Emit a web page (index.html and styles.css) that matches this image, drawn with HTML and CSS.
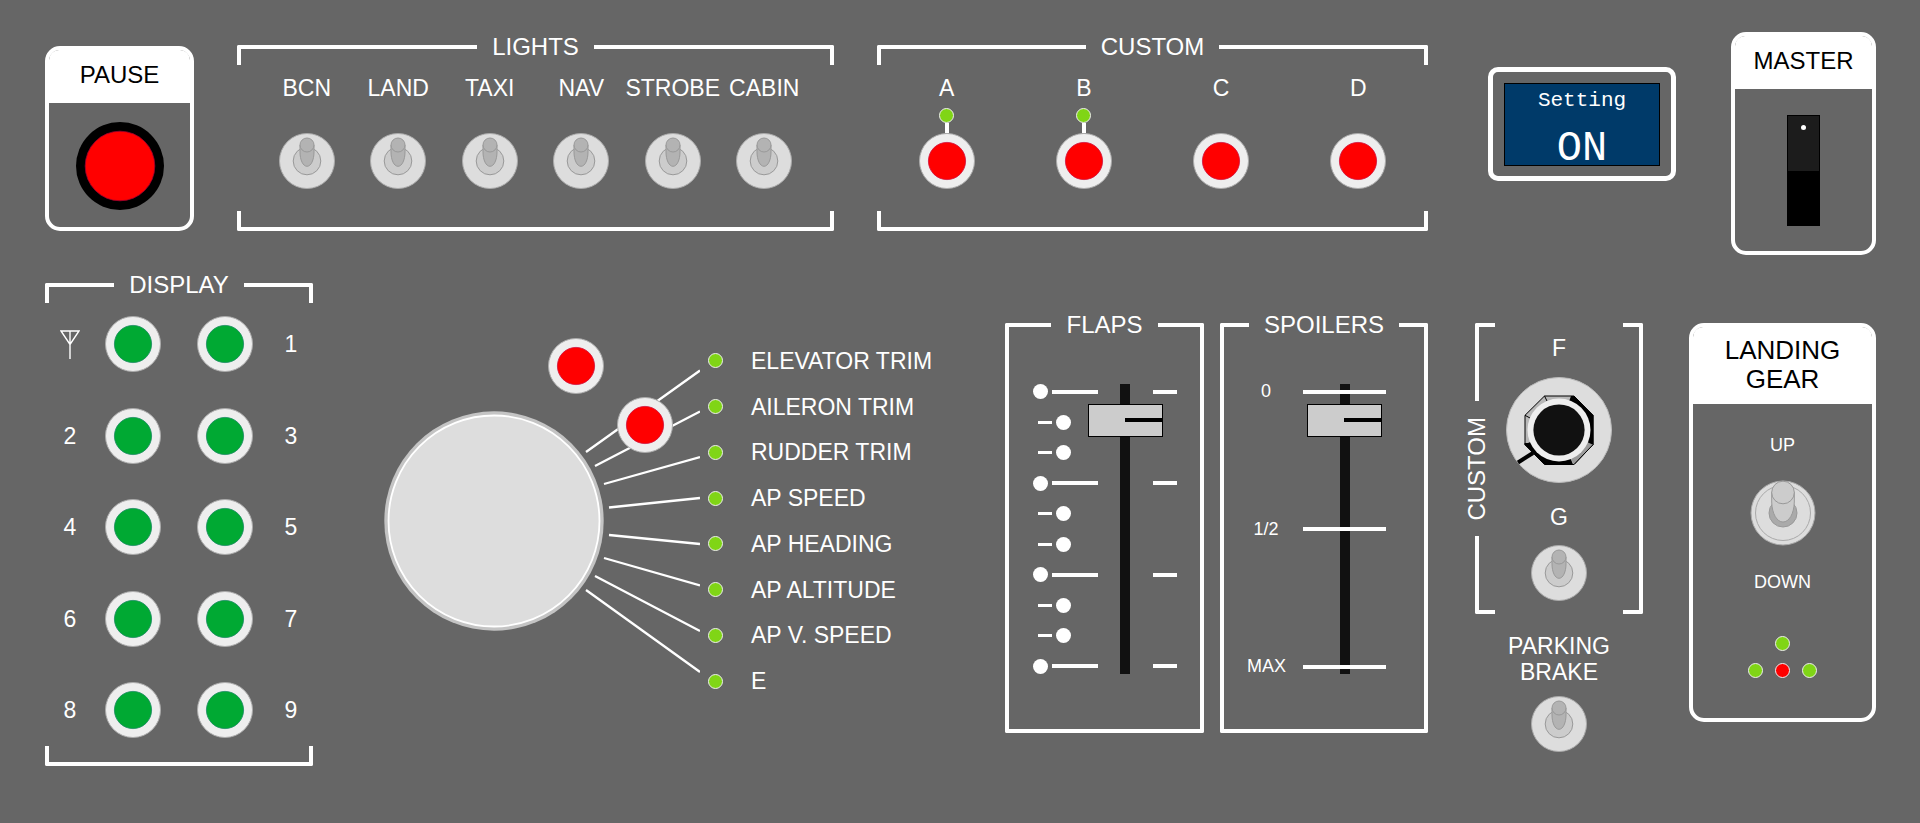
FILE: index.html
```html
<!DOCTYPE html>
<html lang="en">
<head>
<meta charset="utf-8">
<title>Flight control panel</title>
<link rel="stylesheet" href="styles.css">
</head>
<body>
<svg class="defs" width="0" height="0" aria-hidden="true">
  <symbol id="toggle" viewBox="0 0 56 56">
    <circle cx="28" cy="28" r="27.5" fill="#ddd" stroke="#aaa"/>
    <circle cx="28" cy="28" r="13.8" fill="#ccc" stroke="#999"/>
    <path d="M21 12V19C21 27 24 33.3 28 33.3S35 27 35 19V12Z" fill="#b3b3b3" stroke="#999"/>
    <circle cx="28" cy="12" r="7" fill="#b3b3b3" stroke="#999"/>
  </symbol>
  <symbol id="push-red" viewBox="0 0 56 56">
    <circle cx="28" cy="28" r="27.5" fill="#eee" stroke="#aaa"/>
    <circle cx="28" cy="28" r="18.6" fill="#f00" stroke="#d0103c" stroke-width=".8"/>
  </symbol>
  <symbol id="push-green" viewBox="0 0 56 56">
    <circle cx="28" cy="28" r="27.5" fill="#eee" stroke="#aaa"/>
    <circle cx="28" cy="28" r="18.6" fill="#00a933" stroke="#1a8a62" stroke-width=".8"/>
  </symbol>
</svg>

<main class="console">
  <div class="row row-top">
    <section class="card pause">
      <h2 class="card-title" id="pause">PAUSE</h2>
      <button class="knob pause-button" aria-labelledby="pause">
        <svg viewBox="0 0 88 88"><circle cx="44" cy="44" r="44"/><circle cx="44" cy="44" r="34.8" fill="#f00" stroke="#a00030" stroke-width=".8"/></svg>
      </button>
    </section>

    <section class="group">
      <h2 class="group-head"><span>LIGHTS</span></h2>
      <div class="cells lights">
        <div class="cell"><span class="label" id="bcn">BCN</span><button class="knob toggle" role="switch" aria-checked="true" aria-labelledby="bcn"><svg><use href="#toggle"/></svg></button></div>
        <div class="cell"><span class="label" id="land">LAND</span><button class="knob toggle" role="switch" aria-checked="true" aria-labelledby="land"><svg><use href="#toggle"/></svg></button></div>
        <div class="cell"><span class="label" id="taxi">TAXI</span><button class="knob toggle" role="switch" aria-checked="true" aria-labelledby="taxi"><svg><use href="#toggle"/></svg></button></div>
        <div class="cell"><span class="label" id="nav">NAV</span><button class="knob toggle" role="switch" aria-checked="true" aria-labelledby="nav"><svg><use href="#toggle"/></svg></button></div>
        <div class="cell"><span class="label" id="strobe">STROBE</span><button class="knob toggle" role="switch" aria-checked="true" aria-labelledby="strobe"><svg><use href="#toggle"/></svg></button></div>
        <div class="cell"><span class="label" id="cabin">CABIN</span><button class="knob toggle" role="switch" aria-checked="true" aria-labelledby="cabin"><svg><use href="#toggle"/></svg></button></div>
      </div>
      <div class="group-foot"></div>
    </section>

    <section class="group">
      <h2 class="group-head"><span>CUSTOM</span></h2>
      <div class="cells custom">
        <div class="cell"><span class="label" id="ca">A</span><i class="led"></i><i class="stem"></i><button class="knob" aria-labelledby="ca"><svg><use href="#push-red"/></svg></button></div>
        <div class="cell"><span class="label" id="cb">B</span><i class="led"></i><i class="stem"></i><button class="knob" aria-labelledby="cb"><svg><use href="#push-red"/></svg></button></div>
        <div class="cell"><span class="label" id="cc">C</span><button class="knob" aria-labelledby="cc"><svg><use href="#push-red"/></svg></button></div>
        <div class="cell"><span class="label" id="cd">D</span><button class="knob" aria-labelledby="cd"><svg><use href="#push-red"/></svg></button></div>
      </div>
      <div class="group-foot"></div>
    </section>

    <div class="lcd-slot">
      <div class="lcd-frame">
        <div class="lcd">
          <span class="lcd-name">Setting</span>
          <span class="lcd-value">ON</span>
        </div>
      </div>
    </div>

    <section class="card">
      <h2 class="card-title" id="master">MASTER</h2>
      <button class="rocker" role="switch" aria-checked="false" aria-labelledby="master"><i class="rocker-cap"><i class="rocker-dot"></i></i></button>
    </section>
  </div>

  <div class="row row-bottom">
    <section class="group">
      <h2 class="group-head"><span>DISPLAY</span></h2>
      <div class="display-grid">
        <span class="label" id="d0"><svg class="antenna" viewBox="0 0 20 29" role="img" aria-label="Antenna"><path d="M1 1H19L10 14.5ZM10 1V29" fill="none" stroke="#fff" stroke-width="1.4"/></svg></span>
        <button class="knob" aria-labelledby="d0"><svg><use href="#push-green"/></svg></button>
        <button class="knob" aria-labelledby="d1"><svg><use href="#push-green"/></svg></button>
        <span class="label" id="d1">1</span>
        <span class="label" id="d2">2</span>
        <button class="knob" aria-labelledby="d2"><svg><use href="#push-green"/></svg></button>
        <button class="knob" aria-labelledby="d3"><svg><use href="#push-green"/></svg></button>
        <span class="label" id="d3">3</span>
        <span class="label" id="d4">4</span>
        <button class="knob" aria-labelledby="d4"><svg><use href="#push-green"/></svg></button>
        <button class="knob" aria-labelledby="d5"><svg><use href="#push-green"/></svg></button>
        <span class="label" id="d5">5</span>
        <span class="label" id="d6">6</span>
        <button class="knob" aria-labelledby="d6"><svg><use href="#push-green"/></svg></button>
        <button class="knob" aria-labelledby="d7"><svg><use href="#push-green"/></svg></button>
        <span class="label" id="d7">7</span>
        <span class="label" id="d8">8</span>
        <button class="knob" aria-labelledby="d8"><svg><use href="#push-green"/></svg></button>
        <button class="knob" aria-labelledby="d9"><svg><use href="#push-green"/></svg></button>
        <span class="label" id="d9">9</span>
      </div>
      <div class="group-foot"></div>
    </section>

    <section class="selector">
      <div class="dial-area">
        <svg class="rays" viewBox="0 0 316 366" aria-hidden="true">
          <path d="M202 114L316 32.5M211 128L316 73.5M220 146L316 119M225 169.5L316 160M225 197L316 206M220 220L316 247.5M211 238L316 293M202 252L316 334" stroke="#fff" stroke-width="2.3" fill="none"/>
        </svg>
        <button class="knob dial" aria-label="Selector dial">
          <svg viewBox="0 0 220 220"><circle cx="110" cy="110" r="109.7" fill="#c4c4c4"/><circle cx="110" cy="110" r="105.5" fill="#ddd" stroke="#fff" stroke-width="1.8"/></svg>
        </button>
        <button class="knob dial-a" aria-label="Select"><svg><use href="#push-red"/></svg></button>
        <button class="knob dial-b" aria-label="Confirm"><svg><use href="#push-red"/></svg></button>
      </div>
      <ul class="modes">
        <li><i class="led"></i>ELEVATOR TRIM</li>
        <li><i class="led"></i>AILERON TRIM</li>
        <li><i class="led"></i>RUDDER TRIM</li>
        <li><i class="led"></i>AP SPEED</li>
        <li><i class="led"></i>AP HEADING</li>
        <li><i class="led"></i>AP ALTITUDE</li>
        <li><i class="led"></i>AP V. SPEED</li>
        <li><i class="led"></i>E</li>
      </ul>
    </section>

    <section class="group closed">
      <h2 class="group-head"><label for="flaps">FLAPS</label></h2>
      <div class="group-body flaps">
        <div class="scale">
          <div class="major"><i class="dot"></i><i class="tick"></i></div>
          <div class="minor"><i class="tick"></i><i class="dot"></i></div>
          <div class="minor"><i class="tick"></i><i class="dot"></i></div>
          <div class="major"><i class="dot"></i><i class="tick"></i></div>
          <div class="minor"><i class="tick"></i><i class="dot"></i></div>
          <div class="minor"><i class="tick"></i><i class="dot"></i></div>
          <div class="major"><i class="dot"></i><i class="tick"></i></div>
          <div class="minor"><i class="tick"></i><i class="dot"></i></div>
          <div class="minor"><i class="tick"></i><i class="dot"></i></div>
          <div class="major"><i class="dot"></i><i class="tick"></i></div>
        </div>
        <input class="fader" id="flaps" type="range" min="0" max="100" step="0.1" value="7.6">
        <div class="scale right-scale">
          <div><i class="tick"></i></div>
          <div><i class="tick"></i></div>
          <div><i class="tick"></i></div>
          <div><i class="tick"></i></div>
        </div>
      </div>
    </section>

    <section class="group closed spoilers-group">
      <h2 class="group-head"><label for="spoilers">SPOILERS</label></h2>
      <div class="group-body spoilers">
        <div class="scale names"><span>0</span><span>1/2</span><span>MAX</span></div>
        <div class="fader-stack">
          <input class="fader" id="spoilers" type="range" min="0" max="100" step="0.1" value="7.6">
          <div class="scale bars"><div><i class="tick"></i></div><div><i class="tick"></i></div><div><i class="tick"></i></div></div>
        </div>
      </div>
    </section>

    <div class="aux">
      <section class="side-group">
        <h2 class="side-head"><span>CUSTOM</span></h2>
        <div class="side-body">
          <span class="label" id="cf">F</span>
          <button class="knob rotary" aria-labelledby="cf">
            <svg viewBox="-53 -53 106 106">
              <circle r="52.5" fill="#ddd" stroke="#bbb"/>
              <path d="M-41 32.5L-26 23" stroke="#000" stroke-width="4"/>
              <path d="M-14.5-34H15L34-14.7V14.7L15 34.5H-14.5L-34 14.7V-14.7Z" fill="#b8b8b8" stroke="#000"/>
              <path d="M12-34H15L34.5-14.7V14.7L30 17 0 0ZM-34.5 13L-31 13 0 0 14 34.5H-14.5L-34.5 14.7Z"/>
              <path d="M34 14.7L15 34.5 12 29 28 12Z" fill="#999"/>
              <path d="M34 14.7L15 34.5" stroke="#000"/>
              <path d="M-14.5-34L-12-29M-34-14.7L-29-12" stroke="#000"/>
              <circle r="31.5" fill="#eee"/>
              <circle r="25.6" fill="#111"/>
            </svg>
          </button>
          <span class="label" id="cg">G</span>
          <button class="knob" role="switch" aria-checked="true" aria-labelledby="cg"><svg><use href="#toggle"/></svg></button>
        </div>
        <div class="side-end"></div>
      </section>
      <div class="parking">
        <span class="label" id="pb">PARKING<br>BRAKE</span>
        <button class="knob" role="switch" aria-checked="true" aria-labelledby="pb"><svg><use href="#toggle"/></svg></button>
      </div>
    </div>

    <div class="gear-slot">
      <section class="card gear">
        <h2 class="card-title" id="gear">LANDING<br>GEAR</h2>
        <span class="small">UP</span>
        <button class="knob lever" role="switch" aria-checked="true" aria-labelledby="gear">
          <svg viewBox="0 0 66 66">
            <circle cx="33" cy="33" r="32" fill="#ddd" stroke="#aaa"/>
            <circle cx="33" cy="33" r="27.5" fill="#ddd" stroke="#aaa"/>
            <circle cx="33" cy="33" r="14" fill="#aaa" stroke="#999"/>
            <path d="M21.7 12V22C22 34 27 42 33 42S44 34 44.3 22V12Z" fill="#ccc" stroke="#999"/>
            <circle cx="33" cy="12.5" r="11.3" fill="#ccc" stroke="#999"/>
          </svg>
        </button>
        <span class="small">DOWN</span>
        <div class="gear-leds">
          <i class="led"></i>
          <div class="led-row"><i class="led"></i><i class="led red"></i><i class="led"></i></div>
        </div>
      </section>
    </div>
  </div>
</main>
</body>
</html>
```
FILE: styles.css
```css
*, *::before, *::after { box-sizing: border-box; }
body {
  margin: 0;
  min-height: 100vh;
  background: #666;
  color: #fff;
  font-family: "Liberation Sans", Arial, sans-serif;
  font-size: 23px;
  line-height: 26px;
}
.defs { display: block; }
h2 { margin: 0; font-size: 24px; line-height: 28px; font-weight: normal; }
i { display: block; flex: none; }

.console { padding: 32px 44px 0 45px; }
.row { display: grid; align-items: start; }
.row-top { grid-template-columns: 149fr 43fr 597fr 43fr 551fr 60fr 188fr 55fr 145fr; }
.row-top > :nth-child(1) { grid-column: 1; }
.row-top > :nth-child(2) { grid-column: 3; }
.row-top > :nth-child(3) { grid-column: 5; }
.row-top > :nth-child(4) { grid-column: 7; }
.row-top > :nth-child(5) { grid-column: 9; }
.row-bottom {
  grid-template-columns: 268fr 692fr 199fr 224fr 215fr 233fr;
  margin-top: 16px;
}

/* Round controls */
.knob {
  display: block;
  flex: none;
  width: 56px;
  height: 56px;
  padding: 0;
  border: 0;
  border-radius: 50%;
  background: none;
  cursor: pointer;
}
.knob svg { display: block; width: 100%; height: 100%; }
.led {
  width: 15px;
  height: 15px;
  border: 1px solid #eee;
  border-radius: 50%;
  background: #80d516;
}
.led.red { background: #f00; }
.label { text-align: center; white-space: nowrap; }

/* Solid cards */
.card {
  display: flex;
  flex-direction: column;
  align-items: center;
  border: 4px solid #fff;
  border-radius: 15px;
}
.card-title {
  align-self: stretch;
  padding: 11px 0 14px;
  border-radius: 10px 10px 0 0;
  background: #fff;
  color: #000;
  text-align: center;
}
.pause { margin-top: 14px; }
.pause-button { width: 88px; height: 88px; margin: 19px 0 17px; }
.rocker {
  width: 33px;
  height: 111px;
  margin: 26px 0 25px;
  padding: 0;
  border: 1px solid #000;
  background: #000;
}
.rocker-cap { height: 55px; margin-bottom: 54px; padding-top: 9px; background: #1c1c1c; }
.rocker-dot { width: 5px; height: 5px; margin: 0 auto; border-radius: 50%; background: #fff; }

/* Bracketed groups */
.row-top .group { margin-top: 1px; }
.group-head { display: flex; height: 32px; }
.group-head > * { padding: 0 15px; }
.group-head::before, .group-head::after {
  content: "";
  flex: 1;
  height: 20px;
  margin-top: 12px;
  border-top: 4px solid #fff;
}
.group-head::before { border-left: 4px solid #fff; border-top-left-radius: 2px; }
.group-head::after { border-right: 4px solid #fff; border-top-right-radius: 2px; }
.group-foot {
  height: 20px;
  border: solid #fff;
  border-width: 0 4px 4px;
  border-radius: 0 0 2px 2px;
}
.closed { margin-top: 40px; }
.spoilers-group { margin-left: 16px; }
.group-body {
  border: solid #fff;
  border-width: 0 4px 4px;
  border-radius: 0 0 2px 2px;
  padding: 41px 0 55px;
}

.cells { display: grid; padding: 10px 24px 22px; }
.lights { grid-template-columns: repeat(6, minmax(0, 1fr)); }
.custom { grid-template-columns: repeat(4, minmax(0, 1fr)); padding: 10px 1px 22px; }
.cell { display: flex; flex-direction: column; align-items: center; min-height: 114px; }
.cell .knob { margin-top: auto; }
.cell .led { margin-top: 7px; }
.stem { width: 4px; height: 10px; background: #fff; }
.cell .stem + .knob { margin-top: 0; }

/* Readout */
.lcd-frame { margin-top: 35px; padding: 11px 11px 10px; border: 5px solid #fff; border-radius: 10px; }
.lcd {
  display: flex;
  flex-direction: column;
  align-items: center;
  gap: 21px;
  padding-top: 5px;
  border: 1px solid #000;
  background: #003a69;
  font-family: "Liberation Mono", "Courier New", monospace;
}
.lcd-name { font-size: 21px; line-height: 24px; }
.lcd-value { font-size: 42px; line-height: 31px; }

/* Display keys */
.display-grid {
  display: grid;
  grid-template-columns: 34fr 92fr 91fr 42fr;
  align-content: space-between;
  align-items: center;
  justify-items: center;
  height: 443px;
  padding: 13px 1px 8px 8px;
}
.antenna { display: block; width: 20px; height: 29px; }

/* Mode selector */
.selector { display: flex; padding: 67px 0 0 71px; }
.dial-area { position: relative; flex: none; width: 316px; height: 366px; }
.rays { display: block; width: 100%; height: 100%; }
.dial, .dial-a, .dial-b { position: absolute; }
.dial { left: 0; top: 73px; width: 220px; height: 220px; }
.dial-a { left: 164px; top: 0; }
.dial-b { left: 233px; top: 59px; }
.modes {
  display: grid;
  grid-auto-rows: 1fr;
  height: 366px;
  margin: 0;
  padding: 0 0 0 8px;
  list-style: none;
}
.modes li { display: flex; align-items: center; gap: 28px; white-space: nowrap; }

/* Faders */
.flaps, .spoilers { display: flex; justify-content: center; }
.scale { display: flex; flex-direction: column; justify-content: space-between; height: 290px; }
.scale > div { display: flex; align-items: center; height: 15px; gap: 4px; }
.dot { width: 15px; height: 15px; border-radius: 50%; background: #fff; }
.tick { height: 4px; background: #fff; }
.major .tick { width: 46px; }
.minor { padding-left: 5px; }
.minor .tick { width: 14px; height: 3px; }
.right-scale .tick { width: 24px; }
.fader {
  appearance: none;
  writing-mode: vertical-lr;
  width: 75px;
  height: 290px;
  margin: 0;
  background: linear-gradient(#111, #111) center / 10px 100% no-repeat;
  cursor: pointer;
}
.fader::-webkit-slider-thumb {
  appearance: none;
  width: 75px;
  height: 33px;
  border: 1px solid #000;
  background: linear-gradient(#000, #000) right center / 37px 4px no-repeat, #ccc;
}
.flaps .fader { position: relative; margin: 0 -10px; }
.names { width: 38px; margin-right: 18px; font-size: 18px; line-height: 15px; text-align: center; }
.spoilers { justify-content: flex-end; padding-right: 38px; }
.fader-stack { display: grid; justify-items: center; }
.fader-stack > * { grid-area: 1 / 1; }
.bars { z-index: 1; pointer-events: none; }
.bars .tick { width: 83px; }

/* Vertical bracket group */
.aux { padding: 52px 0 0 35px; }
.side-group { display: flex; }
.side-head { display: flex; flex-direction: column; width: 32px; }
.side-head span { width: 28px; padding: 16px 0; writing-mode: vertical-rl; transform: rotate(180deg); }
.side-head::before, .side-head::after {
  content: "";
  flex: 1;
  margin-left: 12px;
  border-left: 4px solid #fff;
}
.side-head::before { border-top: 4px solid #fff; border-top-left-radius: 2px; }
.side-head::after { border-bottom: 4px solid #fff; border-bottom-left-radius: 2px; }
.side-body {
  display: flex;
  flex: 1;
  flex-direction: column;
  align-items: center;
  padding: 12px 0 13px;
}
.side-body .rotary { width: 106px; height: 106px; margin: 16px 0 21px; }
.side-body .label + .knob:last-child { margin-top: 15px; }
.side-end {
  width: 20px;
  border: solid #fff;
  border-width: 4px 4px 4px 0;
  border-radius: 0 2px 2px 0;
}
.parking {
  display: flex;
  flex-direction: column;
  align-items: center;
  gap: 11px;
  padding: 19px 0 0 12px;
}

/* Landing gear */
.gear-slot { padding: 52px 0 0 46px; }
.gear .card-title { padding: 9px 0 10px; font-size: 26px; line-height: 29px; }
.gear .lever { width: 66px; height: 66px; }
.small { margin: 31px 0 25px; font-size: 18px; line-height: 20px; }
.lever + .small { margin: 26px 0 44px; }
.gear-leds { display: flex; flex-direction: column; align-items: center; gap: 12px; padding-bottom: 40px; }
.led-row { display: flex; gap: 12px; }
```
